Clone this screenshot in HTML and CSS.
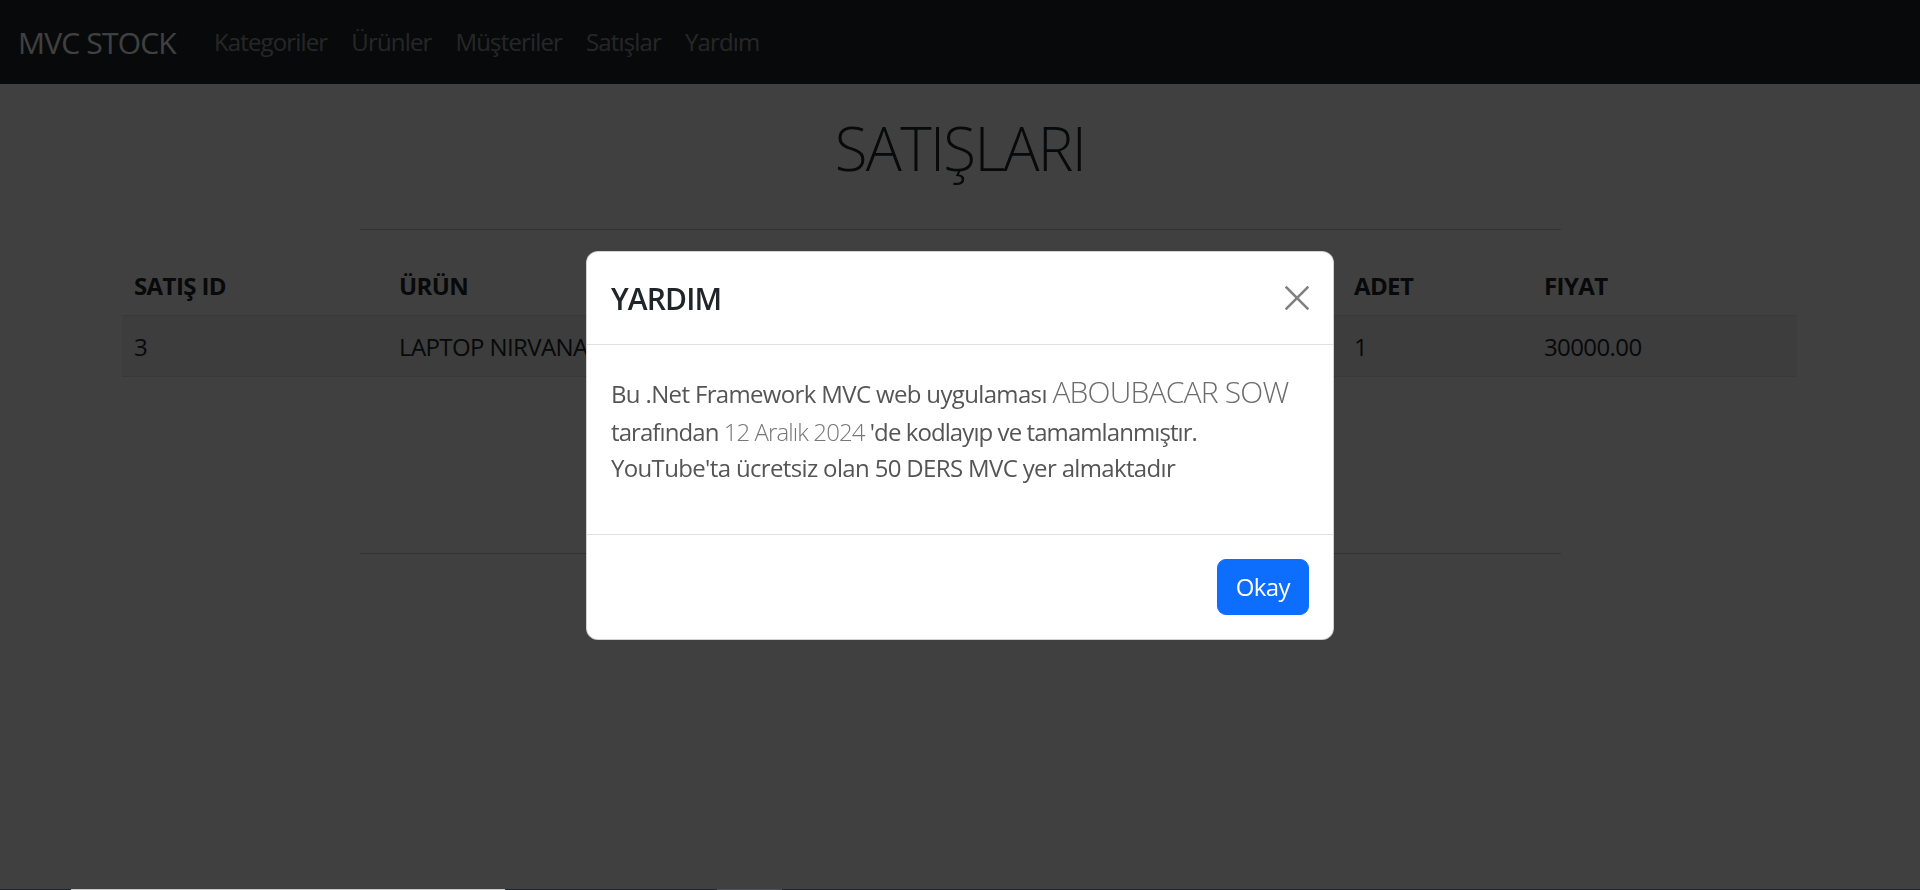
FILE: index.html
```html
<!DOCTYPE html>
<html lang="tr">
<head>
<meta charset="utf-8">
<title>Satışlar - MVC STOCK</title>
<link rel="stylesheet" href="styles.css">
</head>
<body>
<nav class="navbar">
  <a class="brand" href="#">MVC STOCK</a>
  <ul class="nav-links">
    <li><a href="#">Kategoriler</a></li>
    <li><a href="#">Ürünler</a></li>
    <li><a href="#">Müşteriler</a></li>
    <li><a href="#">Satışlar</a></li>
    <li><a href="#">Yardım</a></li>
  </ul>
</nav>
<main class="page">
  <h1 class="page-title">SATIŞLARI</h1>
  <hr class="rule rule-top">
  <div class="table-wrap">
    <table class="sales">
      <colgroup>
        <col class="c1"><col class="c2"><col class="c3"><col class="c4"><col class="c5"><col class="c6">
      </colgroup>
      <thead>
        <tr><th>SATIŞ ID</th><th>ÜRÜN</th><th>MÜŞTERİ</th><th>PERSONEL</th><th>ADET</th><th>FIYAT</th></tr>
      </thead>
      <tbody>
        <tr class="striped"><td>3</td><td>LAPTOP NIRVANA</td><td>ALİ YILMAZ</td><td>AHMET</td><td>1</td><td>30000.00</td></tr>
      </tbody>
    </table>
  </div>
  <hr class="rule rule-bottom">
</main>
<div class="backdrop"></div>
<div class="modal-layer">
  <div class="modal">
    <div class="modal-header">
      <h5 class="modal-title">YARDIM</h5>
      <button class="btn-close" type="button" aria-label="Close">
        <svg viewBox="0 0 24 24" width="24" height="24"><path d="M0.6 0.6 L23.4 23.4 M23.4 0.6 L0.6 23.4" stroke="#808080" stroke-width="2.6" fill="none"/></svg>
      </button>
    </div>
    <div class="modal-body">
      <p class="help-text"><span class="line">Bu .Net Framework MVC web uygulaması <span class="lead">ABOUBACAR SOW</span></span><br><span class="line line-tight">tarafından <span class="date">12 Aralık 2024</span> 'de kodlayıp ve tamamlanmıştır.</span><br><span class="line">YouTube'ta ücretsiz olan 50 DERS MVC yer almaktadır</span></p>
    </div>
    <div class="modal-footer">
      <button class="btn-okay" type="button">Okay</button>
    </div>
  </div>
</div>
<div class="screen-edge"><span class="edge-seg edge-a"></span><span class="edge-seg edge-b"></span></div>
</body>
</html>
```

FILE: styles.css
```css
* { box-sizing: border-box; }
html, body { margin: 0; padding: 0; }
body {
  font-family: "Open Sans", "Noto Sans", sans-serif;
  font-size: 24px;
  line-height: 1.5;
  color: #212529;
  background: #ffffff;
  height: 890px;
  overflow: hidden;
}

/* navbar */
.navbar {
  height: 84px;
  background: #212529;
  display: flex;
  align-items: center;
  padding: 12px 18px;
}
.brand {
  font-size: 30px;
  color: #ffffff;
  text-decoration: none;
  line-height: 45px;
  margin-right: 26px;
  letter-spacing: -0.8px;
}
.nav-links {
  list-style: none;
  display: flex;
  margin: 0;
  padding: 0;
}
.nav-links a {
  display: block;
  padding: 12px 12px;
  color: rgba(255,255,255,0.55);
  text-decoration: none;
  font-size: 24px;
  line-height: 36px;
  letter-spacing: -0.85px;
}

/* page */
.page-title {
  margin: 28px 0 0;
  text-align: center;
  font-size: 60px;
  font-weight: 300;
  line-height: 72px;
  letter-spacing: -1.7px;
}
.rule {
  width: 1201px;
  margin-left: auto;
  margin-right: auto;
  border: 0;
  border-top: 1px solid #c8cacb;
  height: 0;
}
.rule-top { margin-top: 45px; margin-bottom: 25px; }
.rule-bottom { margin-top: 176px; margin-bottom: 0; }

.table-wrap { padding: 0 123px 0 122px; }
.sales {
  width: 100%;
  border-collapse: collapse;
  table-layout: fixed;
}
.c1 { width: 265px; }
.c2 { width: 300px; }
.c3 { width: 330px; }
.c4 { width: 325px; }
.c5 { width: 190px; }
.c6 { width: 265px; }
.sales th, .sales td {
  text-align: left;
  padding: 13px 12px 11px;
  border-bottom: 1px solid #dee2e6;
  white-space: nowrap;
  overflow: hidden;
  letter-spacing: -0.6px;
}
.sales th { font-weight: 700; }
.sales td { font-weight: 400; }
.striped td { background: #f2f2f2; }

/* modal */
.backdrop {
  position: fixed;
  inset: 0;
  background: rgba(0,0,0,0.75);
  z-index: 10;
}
.modal-layer {
  position: fixed;
  inset: 0;
  z-index: 20;
  display: flex;
  align-items: center;
  justify-content: center;
}
.modal {
  width: 748px;
  background: #ffffff;
  border: 1px solid rgba(0,0,0,0.175);
  border-radius: 12px;
  display: flex;
  flex-direction: column;
}
.modal-header {
  display: flex;
  align-items: center;
  padding: 24px 24px 23px;
  border-bottom: 1px solid #dee2e6;
}
.modal-title {
  margin: 0;
  font-size: 30px;
  font-weight: 600;
  line-height: 45px;
  letter-spacing: -0.9px;
}
.btn-close {
  margin-left: auto;
  width: 24px;
  height: 24px;
  padding: 0;
  border: 0;
  background: transparent;
  display: flex;
}
.modal-body { padding: 24px; }
.help-text {
  margin: 0 0 24px;
  color: #555555;
  letter-spacing: -0.65px;
}
.line { white-space: nowrap; }
.line-tight { letter-spacing: -0.92px; }
.lead {
  font-size: 30px;
  font-weight: 300;
  color: #6c6c6c;
  letter-spacing: -0.8px;
}
.date {
  font-weight: 300;
  color: #777777;
}
.modal-footer {
  display: flex;
  justify-content: flex-end;
  padding: 24px 24px 24px;
  border-top: 1px solid #dee2e6;
}
.btn-okay {
  font-family: inherit;
  font-size: 24px;
  line-height: 36px;
  padding: 9px 18px;
  color: #ffffff;
  background: #0d6efd;
  border: 1px solid #0d6efd;
  border-radius: 9px;
  letter-spacing: -0.6px;
}

.screen-edge {
  position: fixed;
  left: 0;
  right: 0;
  bottom: 0;
  height: 1px;
  background: #1d232a;
  z-index: 30;
}
.edge-seg { position: absolute; top: 0; height: 1px; }
.edge-a { left: 71px; width: 434px; background: #c9c9c9; }
.edge-b { left: 717px; width: 65px; background: #4a5058; }
```
